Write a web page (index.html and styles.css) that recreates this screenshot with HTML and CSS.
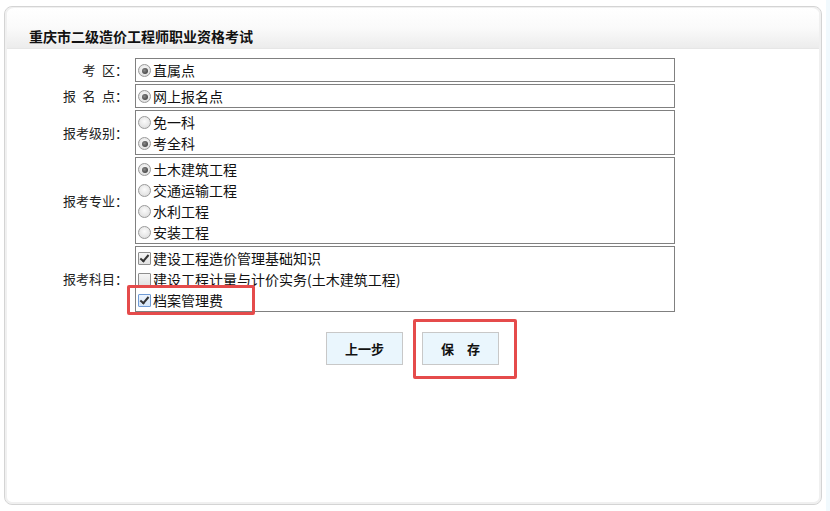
FILE: index.html
```html
<!DOCTYPE html>
<html lang="zh-CN">
<head>
<meta charset="utf-8">
<title>重庆市二级造价工程师职业资格考试</title>
<link rel="stylesheet" href="styles.css">
</head>
<body>
<div class="panel">
  <div class="panel-head">重庆市二级造价工程师职业资格考试</div>
  <div class="form">
    <div class="label">考&ensp;区：</div>
    <div class="box">
      <label class="opt"><input type="radio" name="kq" checked><span>直属点</span></label>
    </div>

    <div class="label">报&ensp;名&ensp;点：</div>
    <div class="box">
      <label class="opt"><input type="radio" name="bmd" checked><span>网上报名点</span></label>
    </div>

    <div class="label">报考级别：</div>
    <div class="box">
      <label class="opt"><input type="radio" name="jb"><span>免一科</span></label>
      <label class="opt"><input type="radio" name="jb" checked><span>考全科</span></label>
    </div>

    <div class="label">报考专业：</div>
    <div class="box">
      <label class="opt"><input type="radio" name="zy" checked><span>土木建筑工程</span></label>
      <label class="opt"><input type="radio" name="zy"><span>交通运输工程</span></label>
      <label class="opt"><input type="radio" name="zy"><span>水利工程</span></label>
      <label class="opt"><input type="radio" name="zy"><span>安装工程</span></label>
    </div>

    <div class="label">报考科目：</div>
    <div class="box">
      <label class="opt"><input type="checkbox" checked><span>建设工程造价管理基础知识</span></label>
      <label class="opt"><input type="checkbox"><span>建设工程计量与计价实务(土木建筑工程)</span></label>
      <label class="opt marked"><input type="checkbox" class="hover" checked><span>档案管理费</span><i class="mark mark-opt"></i></label>
    </div>
  </div>
  <div class="actions">
    <button type="button" class="btn">上一步</button>
    <button type="button" class="btn marked">保&emsp;存<i class="mark mark-btn"></i></button>
  </div>
</div>
</body>
</html>
```

FILE: styles.css
```css
html {
  background: linear-gradient(to right, #ffffff 826px, #f1f9fd 826px);
}
body {
  margin: 0;
  font-family: "Noto Sans CJK SC", "Liberation Sans", sans-serif;
  color: #000;
}
.panel {
  box-sizing: border-box;
  margin: 6px 0 0 4px;
  width: 818px;
  height: 499px;
  border: 1px solid #d4d4d4;
  border-radius: 8px;
  box-shadow: inset 0 0 0 2px #f0f0f0;
  background: #fff;
}
.panel-head {
  height: 41px;
  box-sizing: border-box;
  padding: 18px 0 0 22px;
  font-size: 14px;
  line-height: 20px;
  font-weight: bold;
  color: #111;
  background: linear-gradient(to bottom, #ffffff 0%, #fafafa 50%, #ececec 100%);
  border-bottom: 1px solid #e6e6e6;
  border-radius: 7px 7px 0 0;
  margin: 1px 2px 0 2px;
}
.form {
  display: grid;
  grid-template-columns: 126px 540px;
  column-gap: 4px;
  row-gap: 2px;
  margin-top: 9px;
}
.label {
  display: flex;
  align-items: center;
  justify-content: flex-end;
  padding-right: 3px;
  font-size: 13px;
  color: #222;
  line-height: 18px;
  white-space: pre;
}
.box {
  border: 1px solid #808080;
  padding: 1px 1px 0 1px;
  display: flex;
  flex-direction: column;
}
.opt {
  display: flex;
  align-items: center;
  height: 21px;
  font-size: 14px;
  line-height: 21px;
  color: #111;
  position: relative;
}
.opt span {
  margin-left: 2px;
}
input[type="radio"],
input[type="checkbox"] {
  appearance: none;
  -webkit-appearance: none;
  margin: 0 0 0 1px;
  width: 13px;
  height: 13px;
  box-sizing: border-box;
  position: relative;
  flex: none;
}
input[type="radio"] {
  border: 1px solid #9a9a9a;
  border-radius: 50%;
  background: radial-gradient(circle at 50% 40%, #fbfbfb 0%, #e6e6e6 60%, #d6d6d6 100%);
}
input[type="radio"]:checked::after {
  content: "";
  position: absolute;
  left: 2.5px;
  top: 2.5px;
  width: 6px;
  height: 6px;
  border-radius: 50%;
  background: radial-gradient(circle at 40% 40%, #8a8a8a 0%, #4a4a4a 70%);
}
input[type="checkbox"] {
  border: 1px solid #8f8f8f;
  border-radius: 1px;
  background: linear-gradient(to bottom, #f6f6f6 0%, #e2e2e2 100%);
}
input[type="checkbox"].hover {
  border-color: #6f9bd6;
  background: linear-gradient(to bottom, #eef5fd 0%, #d5e5f7 100%);
}
input[type="checkbox"]:checked::after {
  content: "";
  position: absolute;
  left: 3px;
  top: 0px;
  width: 3px;
  height: 7px;
  border: solid #333;
  border-width: 0 2px 2px 0;
  transform: rotate(40deg);
}
.actions {
  display: flex;
  justify-content: center;
  gap: 19px;
  margin-top: 20px;
  padding-right: 1px;
}
.btn {
  width: 77px;
  height: 33px;
  background: #eaf6fd;
  border: 1px solid #c8c8c8;
  font-family: "Noto Sans CJK SC", "Liberation Sans", sans-serif;
  font-size: 13px;
  font-weight: bold;
  color: #111;
  padding: 0;
  position: relative;
  cursor: pointer;
}
.marked {
  position: relative;
}
.mark {
  position: absolute;
  border: 3px solid #e54b4b;
  border-radius: 2px;
  box-sizing: border-box;
  pointer-events: none;
}
.mark-opt {
  left: -10px;
  top: -5px;
  width: 128px;
  height: 30px;
}
.mark-btn {
  left: -10px;
  top: -14px;
  width: 104px;
  height: 60px;
}
```
